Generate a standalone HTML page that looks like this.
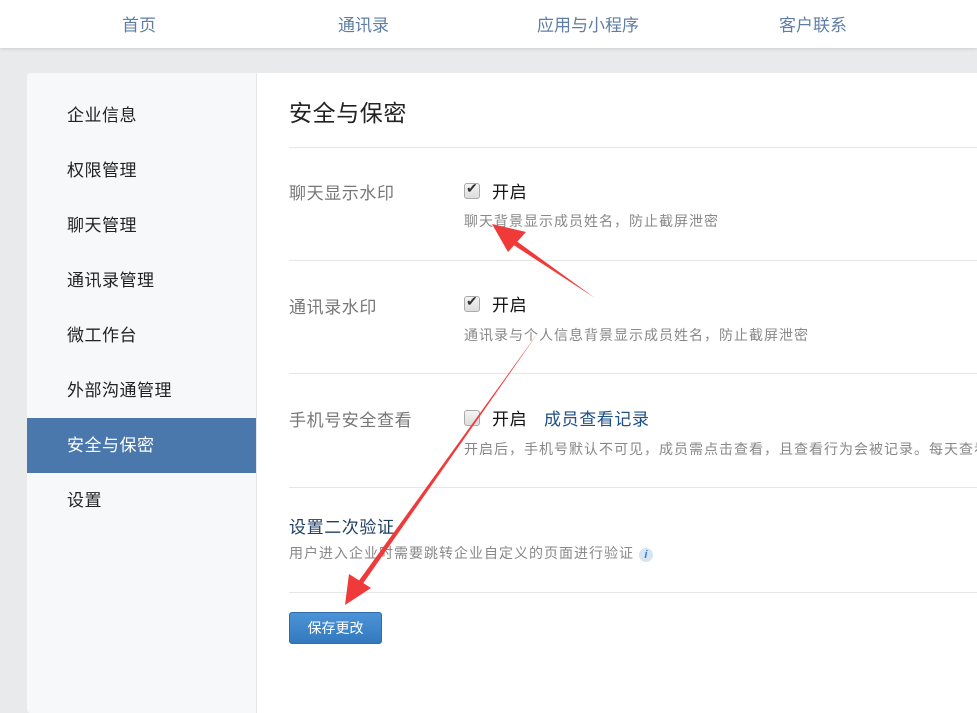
<!DOCTYPE html>
<html><head><meta charset="utf-8"><style>
*{margin:0;padding:0;box-sizing:border-box}
body{width:977px;height:695px;overflow:hidden;background:#e9eaec;font-family:"Liberation Sans","Noto Sans CJK SC",sans-serif;position:relative}
.nav{position:absolute;left:0;top:0;width:977px;height:48px;background:#fff;box-shadow:0 1px 3px rgba(0,0,0,.12)}
.nav span{position:absolute;top:11px;font-size:17px;color:#5f7ea6}
.card{position:absolute;left:27px;top:73px;width:960px;height:640px;background:#fff;border-radius:4px;overflow:hidden}
.side{position:absolute;left:0;top:0;width:230px;height:100%;background:#f7f8fa;border-right:1px solid #e4e6e9}
.side div{height:55px;line-height:55px;padding-left:40px;font-size:17px;color:#222;letter-spacing:.5px}
.side .act{background:#4a77ac;color:#fff}
.a{position:absolute;font-size:17px;letter-spacing:.6px}
.lbl{color:#777}
.desc{color:#888;font-size:14px;letter-spacing:1px}
.hr{position:absolute;left:289px;width:700px;height:1px;background:#e4e6e9}
.cb{position:absolute;width:16px;height:16px;border:1px solid #aaa;border-radius:3px;background:linear-gradient(#f4f4f4,#ddd)}
</style></head><body>
<div class="nav"><span style="left:122px">首页</span><span style="left:338px">通讯录</span><span style="left:537px">应用与小程序</span><span style="left:779px">客户联系</span></div>
<div class="card"><div class="side">
<div style="margin-top:15px">企业信息</div><div>权限管理</div><div>聊天管理</div><div>通讯录管理</div><div>微工作台</div><div>外部沟通管理</div><div class="act">安全与保密</div><div>设置</div></div></div>
<div class="a" style="left:289px;top:94px;font-size:23px;color:#222">安全与保密</div>
<div class="hr" style="top:147px"></div>
<div class="a lbl" style="left:289px;top:179px">聊天显示水印</div>
<div class="cb" style="left:464px;top:183px"></div><div class="a" style="left:466px;top:180px;font-size:14px;color:#333">✔</div>
<div class="a" style="left:492px;top:178px;color:#111">开启</div>
<div class="a desc" style="left:464px;top:211px">聊天背景显示成员姓名，防止截屏泄密</div>
<div class="hr" style="top:260px"></div>
<div class="a lbl" style="left:289px;top:293px">通讯录水印</div>
<div class="cb" style="left:464px;top:296px"></div><div class="a" style="left:466px;top:293px;font-size:14px;color:#333">✔</div>
<div class="a" style="left:492px;top:291px;color:#111">开启</div>
<div class="a desc" style="left:464px;top:325px">通讯录与个人信息背景显示成员姓名，防止截屏泄密</div>
<div class="hr" style="top:373px"></div>
<div class="a lbl" style="left:289px;top:406px">手机号安全查看</div>
<div class="cb" style="left:464px;top:410px"></div>
<div class="a" style="left:492px;top:405px;color:#111">开启</div>
<div class="a" style="left:544px;top:405px;color:#1e4f86">成员查看记录</div>
<div class="a desc" style="left:464px;top:439px;white-space:nowrap">开启后，手机号默认不可见，成员需点击查看，且查看行为会被记录。每天查看</div>
<div class="hr" style="top:487px"></div>
<div class="a" style="left:289px;top:513px;color:#1f3f66">设置二次验证</div>
<div class="a desc" style="left:289px;top:543px">用户进入企业时需要跳转企业自定义的页面进行验证 <span style="display:inline-block;width:14px;height:14px;border-radius:50%;background:#d8e4f0;color:#2a7fd4;font-size:11px;line-height:14px;text-align:center;font-style:italic;font-weight:bold;letter-spacing:0">i</span></div>
<div class="hr" style="top:592px"></div>
<div class="a" style="left:289px;top:612px;width:93px;height:32px;border-radius:3px;background:linear-gradient(#4b93d6,#3479be);border:1px solid #2f6ca8;color:#fff;font-size:14px;line-height:30px;text-align:center;letter-spacing:0">保存更改</div>
<svg style="position:absolute;left:0;top:0" width="977" height="695">
<polygon points="595,298 512,244 515,240" fill="#f03a3a"/>
<polygon points="492,224 526,232 508,252" fill="#f03a3a"/>
<polygon points="540,330 362,585 358,582" fill="#f03a3a"/>
<polygon points="345,605 349,574 371,588" fill="#f03a3a"/>
</svg>
</body></html>
